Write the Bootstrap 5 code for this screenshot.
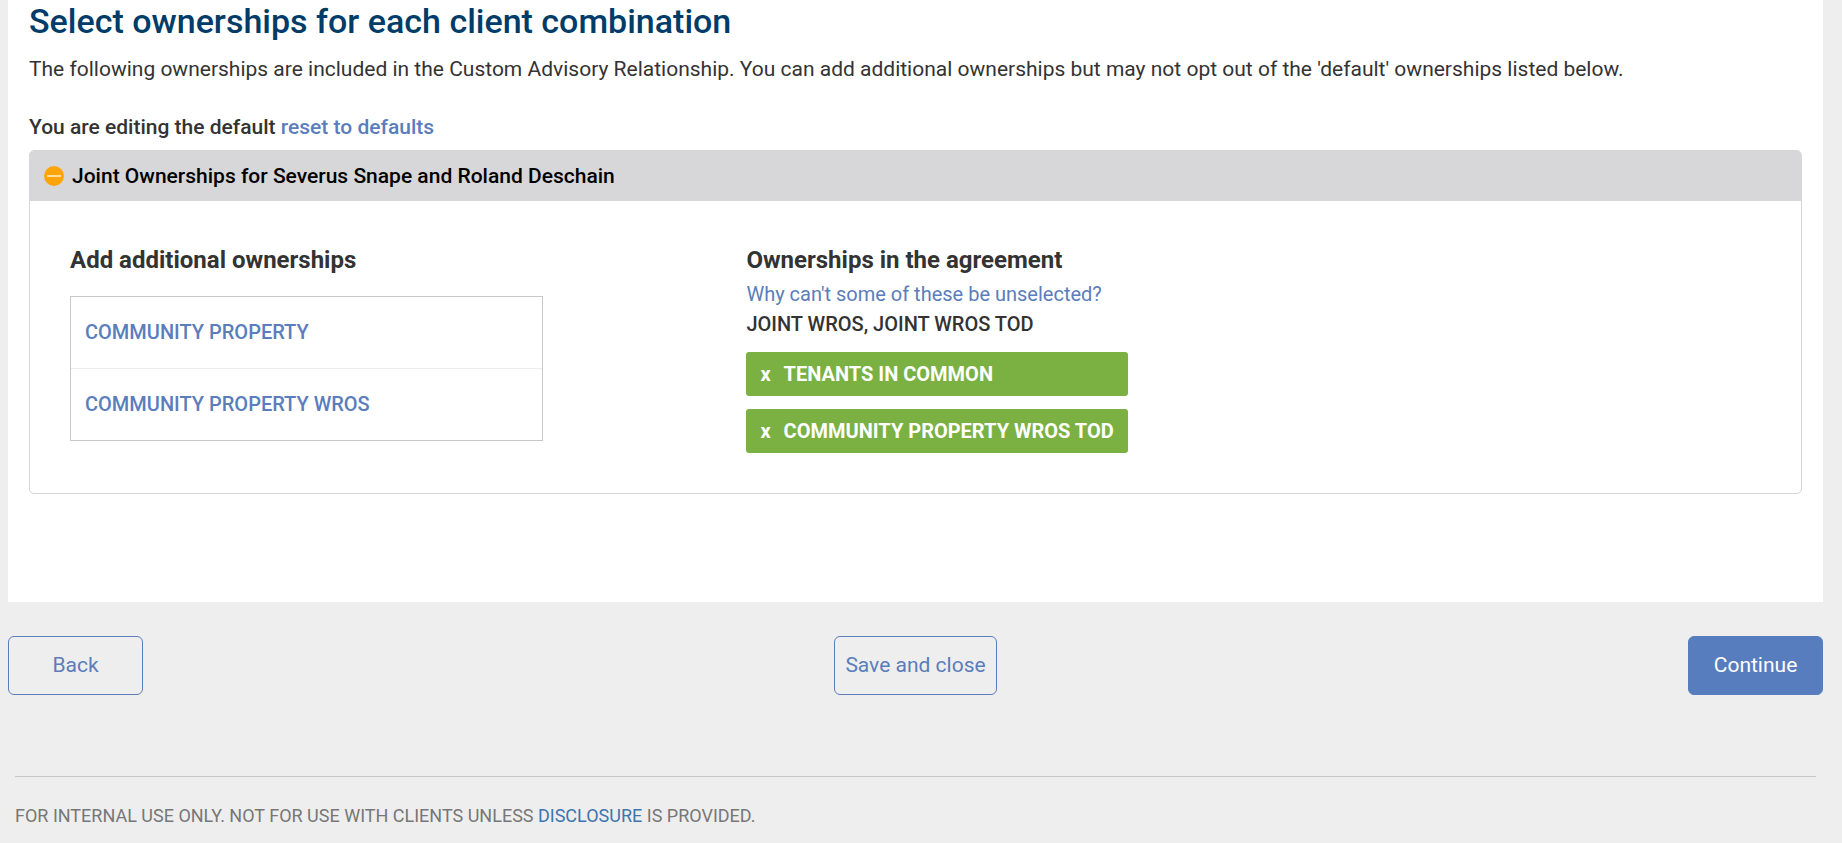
<!DOCTYPE html>
<html lang="en">
<head>
<meta charset="utf-8">
<meta name="viewport" content="width=device-width, initial-scale=1">
<title>Select ownerships</title>
<link href="https://cdn.jsdelivr.net/npm/bootstrap@5.3.0/dist/css/bootstrap.min.css" rel="stylesheet">
<style>
  body { background: #eee; color: #333; font-family: Roboto, "Liberation Sans", sans-serif; font-size: 21px; line-height: 30px; }
  a { color: #5b7dbb; text-decoration: none; }
  .page { padding: 0 19px 0 8px; }
  .panel { background: #fff; padding: 1px 21px 108px; }
  .page-title { color: #003c69; font-size: 34px; font-weight: 500; line-height: 40px; margin-bottom: 13px; }
  .intro { margin-bottom: 28px; }
  .semi { font-weight: 500; }
  .caps { font-size: 20px; font-weight: 500; }
  .owner-card { border: 1px solid #d6d6d8; border-radius: 5px; }
  .owner-head { background: #d7d7d9; color: #000; padding: 10px 14px; border-radius: 4px 4px 0 0; }
  .toggle { width: 20px; height: 20px; }
  .owner-body { padding: 44px 40px 40px; }
  .col-add { width: 40%; }
  .owner-title { font-size: 24px; font-weight: 700; line-height: 30px; margin: 0; }
  .pick-list { width: 70%; margin-top: 21px; border: 1px solid #c8c8c8; }
  .pick-list a { padding: 20px 14px 21px; color: #5b7dbb; }
  .pick-list a + a { border-top: 1px solid #ececec; }
  .why { font-size: 20px; margin-top: 4px; }
  .tag { background: #7ab142; color: #fff; border: 0; border-radius: 3px; padding: 7px 14px; font-weight: 700; font-size: 20px; line-height: 30px; text-align: left; }
  .tag span { margin-right: 13px; }
  .tag-list { gap: 13px; margin-top: 13px; }
  .actions { padding-top: 34px; }
  .actions .btn { height: 59px; min-width: 135px; font-size: 21px; border-radius: 6px; padding: 0 10px; --bs-btn-color: #5b7dbb; --bs-btn-border-color: #5b7dbb; }
  .actions .btn-go { background: #587dbe; border-color: #587dbe; color: #fff; }
  .foot { margin: 81px 7px 0; border-top: 1px solid #c8c8c8; padding: 24px 0 12px; font-size: 18px; color: #777; }
  .foot a { color: #3d75ae; }
</style>
</head>
<body>
<div class="page">
  <main class="panel">
    <h1 class="page-title">Select ownerships for each client combination</h1>
    <p class="intro">The following ownerships are included in the Custom Advisory Relationship. You can add additional ownerships but may not opt out of the 'default' ownerships listed below.</p>
    <p class="semi mb-2">You are editing the default <a href="#">reset to defaults</a></p>
    <section class="owner-card">
      <div class="owner-head d-flex align-items-center gap-2">
        <svg class="toggle flex-shrink-0" viewBox="0 0 20 20" aria-hidden="true"><circle cx="10" cy="10" r="10" fill="#ffa50a"/><path d="M3 10h14" stroke="#ffdca0" stroke-width="2"/></svg>
        <span class="semi">Joint Ownerships for Severus Snape and Roland Deschain</span>
      </div>
      <div class="owner-body d-flex">
        <div class="col-add">
          <h2 class="owner-title">Add additional ownerships</h2>
          <div class="pick-list caps">
            <a class="d-block" href="#">COMMUNITY PROPERTY</a>
            <a class="d-block" href="#">COMMUNITY PROPERTY WROS</a>
          </div>
        </div>
        <div>
          <h2 class="owner-title">Ownerships in the agreement</h2>
          <a class="why d-block" href="#">Why can't some of these be unselected?</a>
          <div class="caps">JOINT WROS, JOINT WROS TOD</div>
          <div class="tag-list d-inline-flex flex-column">
            <button class="tag d-flex" type="button"><span>x</span>TENANTS IN COMMON</button>
            <button class="tag d-flex" type="button"><span>x</span>COMMUNITY PROPERTY WROS TOD</button>
          </div>
        </div>
      </div>
    </section>
  </main>
  <div class="actions d-flex justify-content-between">
    <button class="btn" type="button">Back</button>
    <button class="btn" type="button">Save and close</button>
    <button class="btn btn-go" type="button">Continue</button>
  </div>
  <footer class="foot">FOR INTERNAL USE ONLY. NOT FOR USE WITH CLIENTS UNLESS <a href="#">DISCLOSURE</a> IS PROVIDED.</footer>
</div>
<script src="https://cdn.jsdelivr.net/npm/bootstrap@5.3.0/dist/js/bootstrap.bundle.min.js"></script>
</body>
</html>
